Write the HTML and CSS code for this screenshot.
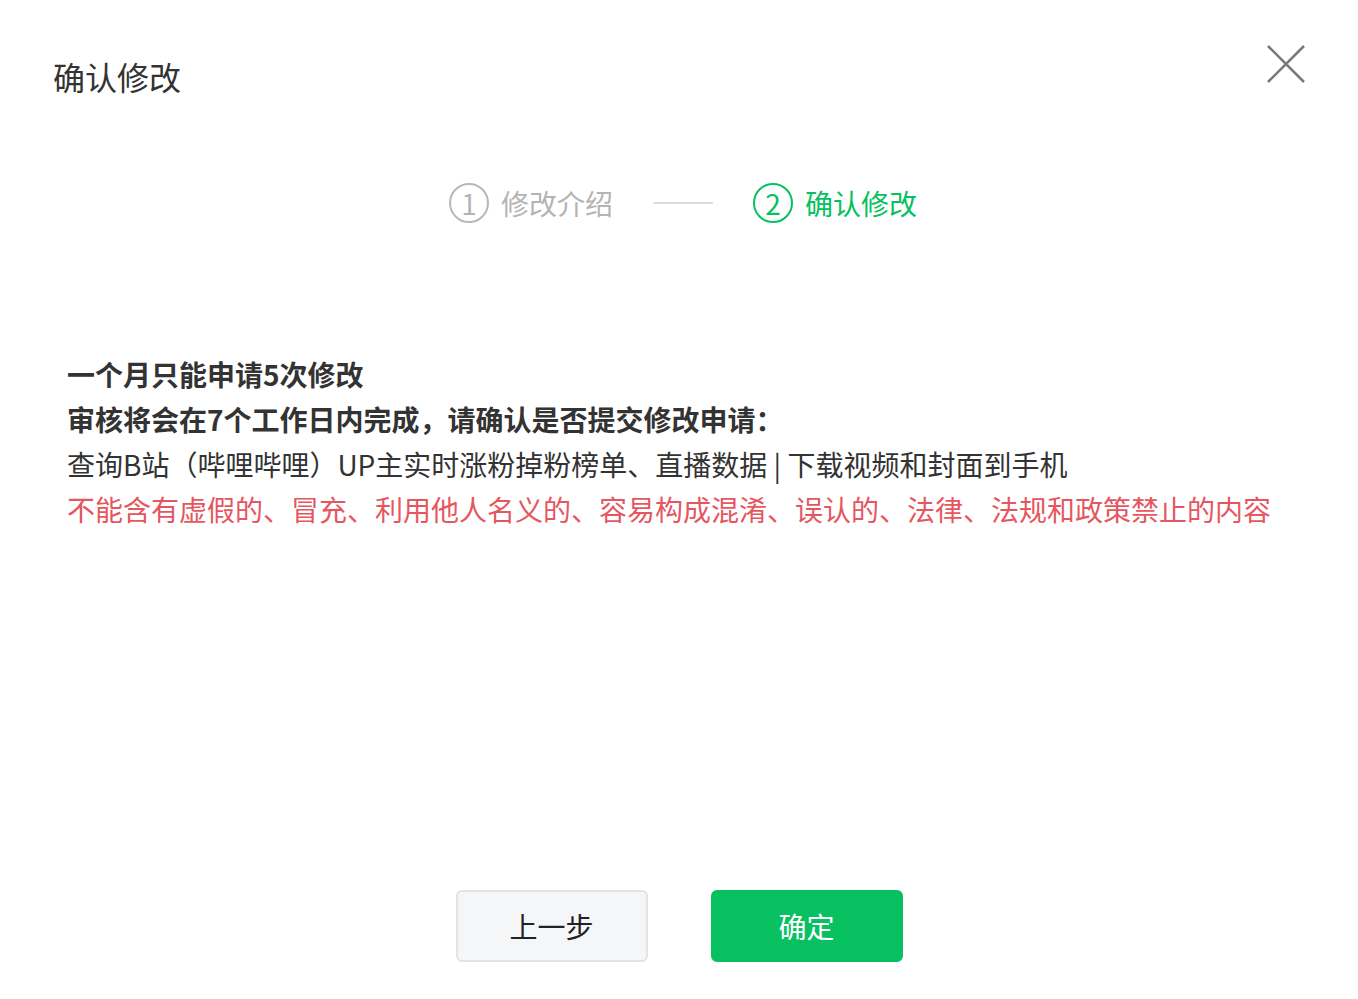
FILE: index.html
```html
<!DOCTYPE html>
<html lang="zh-CN">
<head>
  <meta charset="UTF-8">
  <title>确认修改</title>
  <link rel="stylesheet" href="styles.css">
</head>
<body>
  <div class="dialog">
    <div class="header">
      <h1 class="title">确认修改</h1>
      <button class="close" aria-label="关闭">
        <svg width="40" height="40" viewBox="0 0 40 40">
          <path d="M2 2 L38 38 M38 2 L2 38" stroke="#7a7a7a" stroke-width="2.6" fill="none"/>
        </svg>
      </button>
    </div>

    <div class="steps">
      <div class="step">
        <span class="num">1</span>
        <span class="label">修改介绍</span>
      </div>
      <span class="line"></span>
      <div class="step active">
        <span class="num">2</span>
        <span class="label">确认修改</span>
      </div>
    </div>

    <div class="content">
      <p class="strong">一个月只能申请5次修改</p>
      <p class="strong">审核将会在7个工作日内完成，请确认是否提交修改申请：</p>
      <p>查询B站（哔哩哔哩）UP主实时涨粉掉粉榜单、直播数据 | 下载视频和封面到手机</p>
      <p class="warn">不能含有虚假的、冒充、利用他人名义的、容易构成混淆、误认的、法律、法规和政策禁止的内容</p>
    </div>

    <div class="actions">
      <button class="btn">上一步</button>
      <button class="btn primary">确定</button>
    </div>
  </div>
</body>
</html>
```

FILE: styles.css
```css
body {
  margin: 0;
  background: #ffffff;
  font-family: "Noto Sans CJK SC", "Noto Sans", sans-serif;
  color: #333;
}
.dialog {
  height: 999px;
  display: flex;
  flex-direction: column;
}
.header {
  display: flex;
  justify-content: space-between;
  align-items: flex-start;
  padding: 42px 52px 0 53px;
}
.title {
  margin: 0;
  font-size: 32px;
  font-weight: normal;
  line-height: 68px;
  color: #333;
}
.close {
  border: none;
  background: none;
  padding: 0;
  margin-top: 2px;
  cursor: pointer;
  width: 40px;
  height: 40px;
}
.steps {
  display: flex;
  justify-content: center;
  align-items: center;
  margin-top: 61px;
  padding-left: 8px;
  height: 64px;
}
.step {
  display: flex;
  align-items: center;
  color: #b4b4b4;
}
.step .num {
  width: 36px;
  height: 36px;
  border: 2px solid #b8b8b8;
  border-radius: 50%;
  display: flex;
  align-items: center;
  justify-content: center;
  font-size: 28px;
  line-height: 1;
  margin-right: 12px;
}
.step .label {
  font-size: 28px;
}
.step.active {
  color: #07c160;
}
.step.active .num {
  border-color: #07c160;
}
.line {
  width: 60px;
  height: 2px;
  background: #dedede;
  margin: 0 40px;
}
.content {
  padding: 117px 67px 0;
}
.content p {
  margin: 0;
  font-size: 28px;
  line-height: 45px;
  color: #333;
}
.content .strong {
  font-weight: bold;
}
.content .warn {
  color: #e5575f;
}
.actions {
  margin-top: auto;
  margin-bottom: 37px;
  display: flex;
  justify-content: center;
  gap: 63px;
}
.btn {
  width: 192px;
  height: 72px;
  font-family: inherit;
  font-size: 28px;
  border-radius: 6px;
  border: 2px solid #e2e3e5;
  background: #f5f6f8;
  color: #222;
  cursor: pointer;
}
.btn.primary {
  border-color: #07c160;
  background: #07c160;
  color: #fff;
}
```
